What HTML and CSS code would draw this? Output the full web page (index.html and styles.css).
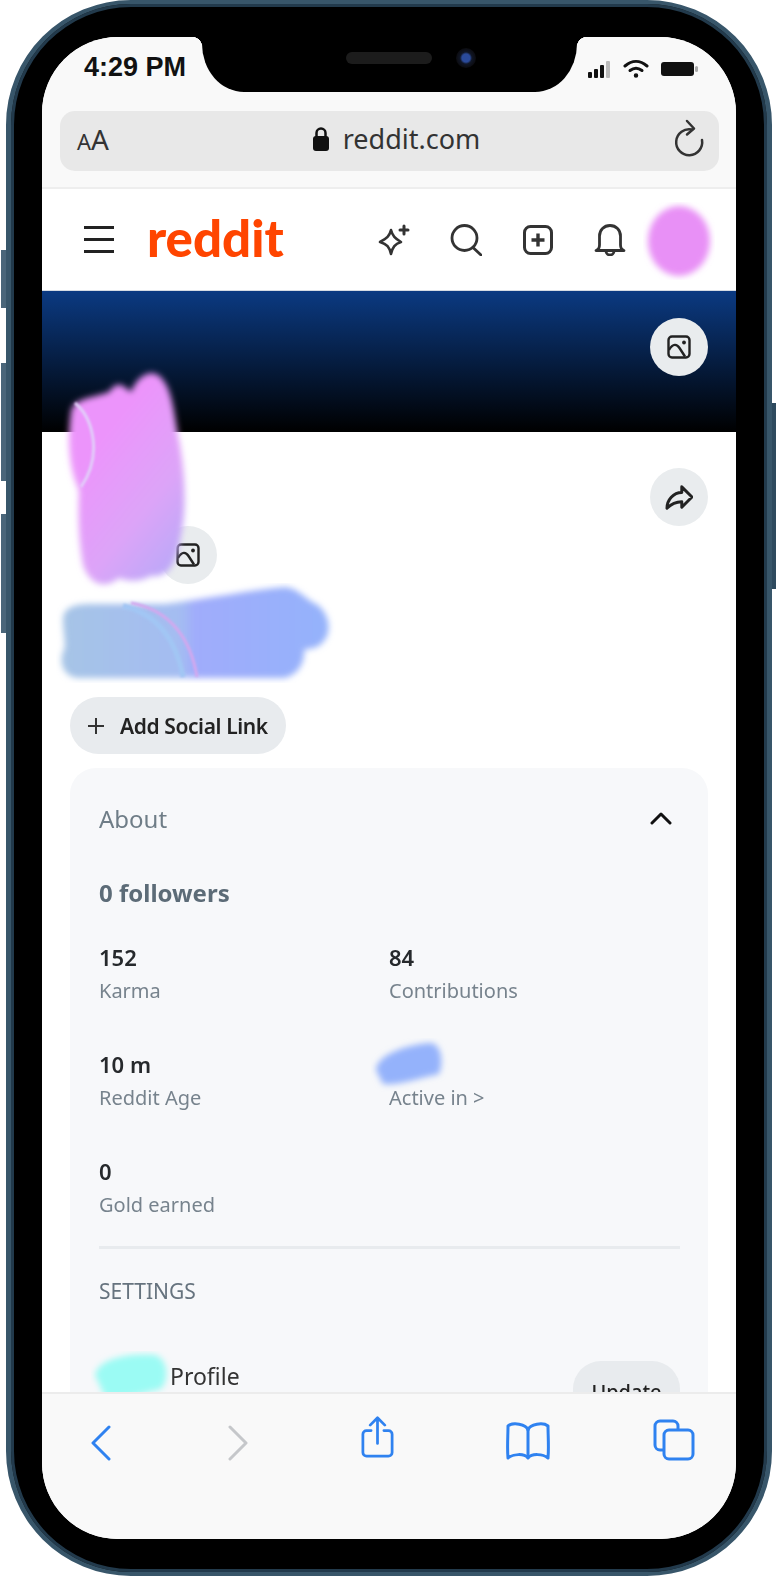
FILE: index.html
```html
<!DOCTYPE html>
<html>

<head>
    <title>Reddit profile</title>
    <link rel="stylesheet" href="styles.css">
</head>

<body>
    <div class="phone">
        <i class="side-btn btn-a"></i>
        <i class="side-btn btn-b"></i>
        <i class="side-btn btn-c"></i>
        <i class="side-btn btn-d"></i>

        <div class="screen">
            <div class="notch">
                <span class="speaker"></span>
                <span class="camera"></span>
            </div>

            <div class="chrome">
                <div class="status">
                    <span class="time">4:29 PM</span>
                    <div class="status-icons">
                        <svg width="28" height="20" viewBox="0 0 26 20">
                            <rect x="0" y="13" width="4" height="6" rx="1" fill="#111" />
                            <rect x="6" y="10" width="4" height="9" rx="1" fill="#111" />
                            <rect x="12" y="6" width="4" height="13" rx="1" fill="#111" />
                            <rect x="18" y="2" width="4" height="17" rx="1" fill="#bbb" />
                        </svg>
                        <svg class="wifi" width="26" height="20" viewBox="0 0 26 20" fill="none" stroke="#111" stroke-width="3" stroke-linecap="round">
                            <path d="M2 7C9 1 17 1 24 7" />
                            <path d="M7 11.500C11 8.500 15 8.500 19 11.500" />
                            <circle cx="13" cy="16.500" r="1.500" fill="#111" stroke-width="1.500" />
                        </svg>
                        <svg width="40" height="20" viewBox="0 0 40 20">
                            <rect x="1" y="3" width="33" height="14" rx="3" fill="#111" />
                            <rect x="35" y="7" width="3" height="6" rx="1.500" fill="#aaa" />
                        </svg>
                    </div>
                </div>
                <div class="address">
                    <span class="aa"><small>A</small>A</span>
                    <div class="url">
                        <svg width="18" height="26" viewBox="0 0 18 26">
                            <path d="M4.500 11V7a4.500 4.500 0 0 1 9 0v4" fill="none" stroke="#111" stroke-width="2.500" />
                            <rect x="1" y="10" width="16" height="15" rx="3" fill="#111" />
                        </svg>
                        <span>reddit.com</span>
                    </div>
                    <svg class="reload" width="32" height="40" viewBox="0 0 32 40" fill="none" stroke="#333" stroke-width="2.500" stroke-linecap="round" stroke-linejoin="round">
                        <path d="M19 10.500A13 13 0 1 0 29 21" />
                        <path d="M14 2l7 7.500-7 6" />
                    </svg>
                </div>
            </div>

            <div class="page">
                <header class="site-head">
                    <div class="burger"><i></i><i></i><i></i></div>
                    <span class="logo">reddit</span>
                    <div class="head-icons">
                        <svg width="32" height="32" viewBox="0 0 32 32" fill="none" stroke="#333" stroke-width="2.600" stroke-linejoin="round" stroke-linecap="round">
                            <path d="M13 6C14.500 12 17 14.500 23 18C17 20 14.500 23 13 30C11.500 23 9 20 2 18C9 14.500 11.500 12 13 6Z" />
                            <path d="M26 2v8M22 6h8" stroke-width="3" />
                        </svg>
                        <svg width="32" height="32" viewBox="0 0 32 32" fill="none" stroke="#333" stroke-width="2.800" stroke-linecap="round">
                            <circle cx="14.500" cy="14" r="12.500" />
                            <path d="M23.500 24L31 31" />
                        </svg>
                        <svg width="32" height="32" viewBox="0 0 32 32" fill="none" stroke="#333" stroke-width="3">
                            <rect x="2.500" y="2.500" width="27" height="27" rx="6" />
                            <path d="M16 9.500v13M9.500 16h13" stroke-width="3.400" />
                        </svg>
                        <svg width="32" height="32" viewBox="0 0 32 32" fill="none" stroke="#333" stroke-width="2.800" stroke-linejoin="round" stroke-linecap="round">
                            <path d="M2 26.500C5 25.500 5.500 24 5.500 21V12C5.500 6 10 1.500 16 1.500C22 1.500 26.500 6 26.500 12V21C26.500 24 27 25.500 30 26.500Z" />
                            <path d="M12 27a4 4 0 0 0 8 0" />
                        </svg>
                    </div>
                </header>

                <div class="banner">
                    <button class="round-btn">
                        <svg width="24" height="24" viewBox="0 0 24 24" fill="none" stroke="#222" stroke-width="2.400" stroke-linejoin="round">
                            <rect x="1.500" y="1.500" width="21" height="21" rx="3.500" />
                            <path d="M2 15C6 8 10 9 12.500 13L18 21.500" />
                            <circle cx="17" cy="7.500" r="1.900" fill="#222" stroke="none" />
                        </svg>
                    </button>
                </div>

                <section class="profile">
                    <div class="profile-top">
                        <button class="round-btn avatar-btn">
                            <svg width="24" height="24" viewBox="0 0 24 24" fill="none" stroke="#222" stroke-width="2.400" stroke-linejoin="round">
                                <rect x="1.500" y="1.500" width="21" height="21" rx="3.500" />
                                <path d="M2 15C6 8 10 9 12.500 13L18 21.500" />
                                <circle cx="17" cy="7.500" r="1.900" fill="#222" stroke="none" />
                            </svg>
                        </button>
                        <button class="round-btn">
                            <svg width="28" height="25" viewBox="0 0 30 27" fill="none" stroke="#222" stroke-width="3.200" stroke-linejoin="round">
                                <path d="M18 2L29 13L18 24V18C12 18 7 20 2 25C2 16 9 8 18 8Z" />
                            </svg>
                        </button>
                    </div>

                    <button class="social">
                        <svg width="18" height="18" viewBox="0 0 18 18" stroke="#333" stroke-width="2">
                            <path d="M9 1v16M1 9h16" />
                        </svg>
                        <span>Add Social Link</span>
                    </button>

                    <div class="card">
                        <div class="card-head">
                            <span>About</span>
                            <svg width="22" height="14" viewBox="0 0 22 14" fill="none" stroke="#111" stroke-width="3" stroke-linecap="round" stroke-linejoin="round">
                                <path d="M2 12L11 3L20 12" />
                            </svg>
                        </div>
                        <div class="followers">0 followers</div>
                        <div class="stats">
                            <div class="stat"><b>152</b><span>Karma</span></div>
                            <div class="stat"><b>84</b><span>Contributions</span></div>
                            <div class="stat"><b>10 m</b><span>Reddit Age</span></div>
                            <div class="stat"><b>&nbsp;</b><span>Active in &gt;</span></div>
                            <div class="stat"><b>0</b><span>Gold earned</span></div>
                        </div>
                        <div class="divider"></div>
                        <div class="settings-label">SETTINGS</div>
                        <div class="setting">
                            <span class="setting-name">Profile</span>
                            <button class="update">Update</button>
                        </div>
                    </div>
                </section>

                <!-- scribbles covering the private bits of the screenshot -->
                <svg class="scribble scr-head" width="72" height="78" viewBox="0 0 72 78">
                    <ellipse cx="36" cy="39" rx="31" ry="35" fill="#e890f6" filter="url(#soft)" />
                </svg>
                <svg class="scribble scr-avatar" width="130" height="230" viewBox="60 365 130 230">
                    <path d="M70 412C72 398 92 398 108 392C118 378 124 388 130 392C136 376 152 366 162 380C172 392 174 420 178 440C184 470 186 510 180 535C176 560 170 578 150 576C138 582 128 582 118 578C104 590 88 584 82 565C76 530 78 505 78 490C68 470 66 440 70 412Z" fill="url(#pink)" filter="url(#soft)" />
                    <path d="M74 403C92 418 102 455 80 487" fill="none" stroke="#e2cdf9" stroke-width="3" filter="url(#soft-thin)" />
                </svg>
                <svg class="scribble scr-name" width="280" height="100" viewBox="55 583 280 100">
                    <path d="M62 620C62 608 72 604 90 604L164 604C210 598 250 590 285 587C300 590 305 600 315 604C328 612 332 632 322 642C316 650 306 648 303 650C304 662 298 674 284 678L76 678C62 676 58 662 62 652C66 646 62 634 62 620Z" fill="url(#bluepurple)" filter="url(#soft)" />
                    <path d="M130 603C170 610 190 640 196 677" fill="none" stroke="#d3a8ee" stroke-width="3" filter="url(#soft-thin)" />
                    <path d="M122 606C160 615 176 645 182 677" fill="none" stroke="#a2c6f4" stroke-width="5" filter="url(#soft-thin)" />
                </svg>
                <svg class="scribble scr-active" width="80" height="54" viewBox="0 0 80 54">
                    <path d="M5 32C6 16 38 6 60 5C72 7 72 28 68 36C50 40 25 48 12 46Z" fill="#94b2fb" filter="url(#soft)" />
                </svg>
                <svg class="scribble scr-setting" width="84" height="54" viewBox="0 0 84 54">
                    <path d="M4 24C8 6 42 2 64 4C78 8 78 30 70 38C52 42 30 50 14 46Z" fill="#9bfbf4" filter="url(#soft)" />
                </svg>
            </div>

            <nav class="toolbar">
                <svg class="tb-back" width="22" height="36" viewBox="0 0 22 36" fill="none" stroke="#2f82f0" stroke-width="3" stroke-linecap="round" stroke-linejoin="round">
                    <path d="M19 2L3 18L19 34" />
                </svg>
                <svg class="tb-forward" width="22" height="36" viewBox="0 0 22 36" fill="none" stroke="#c5c7ca" stroke-width="3" stroke-linecap="round" stroke-linejoin="round">
                    <path d="M3 2L19 18L3 34" />
                </svg>
                <svg class="tb-share" width="33" height="42" viewBox="0 0 36 46" fill="none" stroke="#2f82f0" stroke-width="3" stroke-linecap="round" stroke-linejoin="round">
                    <path d="M11 16H6a4 4 0 0 0-4 4v20a4 4 0 0 0 4 4h24a4 4 0 0 0 4-4V20a4 4 0 0 0-4-4h-5" />
                    <path d="M18 30V3M10 10l8-8 8 8" />
                </svg>
                <svg class="tb-book" width="46" height="38" viewBox="0 0 46 38" fill="none" stroke="#2f82f0" stroke-width="3" stroke-linecap="round" stroke-linejoin="round">
                    <path d="M23 8C21 2 8 0 3 4C3 14 2 26 3 36C8 32 19 31 23 36C27 31 38 32 43 36C44 26 43 14 43 4C38 0 25 2 23 8Z" />
                    <path d="M23 8V34" />
                </svg>
                <svg class="tb-tabs" width="42" height="42" viewBox="0 0 42 42" fill="none" stroke="#2f82f0" stroke-width="3" stroke-linejoin="round">
                    <path d="M11 31H7a5 5 0 0 1-5-5V7a5 5 0 0 1 5-5h13a5 5 0 0 1 5 5v4" />
                    <rect x="11" y="11" width="29" height="29" rx="5" />
                </svg>
            </nav>
        </div>
    </div>

    <svg width="0" height="0" class="defs">
        <defs>
            <filter id="soft" x="-20%" y="-20%" width="140%" height="140%">
                <feGaussianBlur stdDeviation="3" />
            </filter>
            <filter id="soft-thin" x="-20%" y="-20%" width="140%" height="140%">
                <feGaussianBlur stdDeviation="1" />
            </filter>
            <linearGradient id="pink" x1="0.200" y1="0.100" x2="0.800" y2="1">
                <stop offset="0.200" stop-color="#ec94fb" />
                <stop offset="0.650" stop-color="#dda4f8" />
                <stop offset="1" stop-color="#bba8f8" />
            </linearGradient>
            <linearGradient id="bluepurple" x1="0" y1="0" x2="1" y2="0">
                <stop offset="0" stop-color="#a6c4e6" />
                <stop offset="0.450" stop-color="#a4bcf2" />
                <stop offset="0.500" stop-color="#a0acfb" />
                <stop offset="1" stop-color="#94b2fb" />
            </linearGradient>
        </defs>
    </svg>
</body>

</html>
```

FILE: styles.css
```css
* {
    box-sizing: border-box;
}

body {
    margin: 0;
    background-color: white;
    font-family: "Noto Sans", "Liberation Sans", sans-serif;
}

.defs {
    position: absolute;
}

button {
    border: none;
    font-family: inherit;
    padding: 0;
}

/* device */
.phone {
    position: relative;
    width: 766px;
    height: 1576px;
    margin-left: 6px;
    padding: 33px 31px;
    background-color: black;
    border-style: solid;
    border-color: #38566a;
    border-width: 4px 5px;
    border-radius: 125px;
    box-shadow: inset 0 0 0 3px #223a4c;
    filter: blur(0.6px);
}

.side-btn {
    position: absolute;
    width: 5px;
    background-color: #4a667a;
}

.btn-a { left: -10px; top: 246px; height: 58px; }
.btn-b { left: -10px; top: 359px; height: 118px; }
.btn-c { left: -10px; top: 510px; height: 119px; }
.btn-d { right: -9px; top: 399px; width: 4px; height: 186px; background-color: #2e4a5e; }

.screen {
    position: relative;
    display: flex;
    flex-direction: column;
    height: 100%;
    overflow: hidden;
    background-color: white;
    border-radius: 76px;
}

.notch {
    position: absolute;
    top: 0;
    left: 160px;
    width: 375px;
    height: 55px;
    display: flex;
    justify-content: center;
    align-items: center;
    gap: 24px;
    padding-bottom: 14px;
    padding-left: 42px;
    background-color: black;
    border-radius: 0 0 42px 42px / 0 0 48px 48px;
}

.notch::before,
.notch::after {
    content: "";
    position: absolute;
    top: 0;
    width: 10px;
    height: 10px;
}

.notch::before {
    left: -10px;
    background: radial-gradient(circle at 0 100%, transparent 10px, black 10.500px);
}

.notch::after {
    right: -10px;
    background: radial-gradient(circle at 100% 100%, transparent 10px, black 10.500px);
}

.speaker {
    width: 86px;
    height: 12px;
    background-color: #1c1c1c;
    border-radius: 6px;
}

.camera {
    width: 20px;
    height: 20px;
    background: radial-gradient(circle, #2a4a9a 0 4px, #101626 6px, #0b0b0f 10px);
    border-radius: 50%;
}

/* safari top */
.chrome {
    flex: none;
    height: 152px;
    background-color: #f9f9f9;
    border-bottom: 2px solid #eeeeee;
}

.status {
    display: flex;
    justify-content: space-between;
    align-items: center;
    height: 74px;
    padding: 0 36px 14px 42px;
}

.time {
    font-family: "Liberation Sans", sans-serif;
    font-size: 27px;
    font-weight: bold;
    color: #111;
}

.status-icons {
    display: flex;
    align-items: center;
    gap: 8px;
    padding-top: 4px;
}

.wifi {
    margin-right: 3px;
}

.address {
    display: flex;
    justify-content: space-between;
    align-items: center;
    height: 60px;
    margin: 0 17px 0 18px;
    padding: 0 14px 5px 17px;
    background-color: #e8e8e8;
    border-radius: 15px;
}

.aa {
    font-size: 28px;
    color: #333;
}

.aa small {
    font-size: 22px;
}

.url {
    display: flex;
    align-items: center;
    gap: 13px;
    margin-left: 10px;
    font-size: 27px;
    color: #333;
}

/* reddit page */
.page {
    position: relative;
    flex: 1;
    min-height: 0;
    overflow: hidden;
}

.site-head {
    display: flex;
    align-items: center;
    height: 102px;
    padding: 0 110px 0 42px;
    border-bottom: 1px solid #d5dbe3;
}

.burger {
    display: flex;
    flex-direction: column;
    gap: 9px;
    width: 30px;
}

.burger i {
    height: 3px;
    background-color: #222;
}

.logo {
    margin: 0 0 5px 33px;
    font-family: "Lato", sans-serif;
    font-size: 51px;
    font-weight: 900;
    line-height: 1;
    color: #ff4500;
}

.head-icons {
    display: flex;
    gap: 40px;
    margin-left: auto;
}

.banner {
    display: flex;
    justify-content: flex-end;
    height: 141px;
    padding: 27px 28px 0 0;
    background: linear-gradient(#0b3a82, #000);
}

.round-btn {
    display: flex;
    justify-content: center;
    align-items: center;
    width: 58px;
    height: 58px;
    background-color: #e9ecee;
    border-radius: 50%;
}

.profile {
    padding: 0 28px;
}

.profile-top {
    display: flex;
    justify-content: space-between;
    align-items: flex-start;
    height: 265px;
    padding-top: 36px;
}

.avatar-btn {
    margin: 58px 0 0 89px;
}

.social {
    display: flex;
    align-items: center;
    gap: 15px;
    width: 216px;
    height: 57px;
    padding: 0 17px;
    background-color: #e8ebee;
    border-radius: 29px;
    font-size: 21px;
    font-weight: 600;
    letter-spacing: -0.4px;
    color: #222;
}

.card {
    height: 700px;
    margin-top: 14px;
    padding: 0 28px 0 29px;
    background-color: #f7f8fa;
    border-radius: 26px;
}

.card-head {
    display: flex;
    justify-content: space-between;
    align-items: center;
    height: 100px;
    padding-right: 8px;
    font-size: 24px;
    color: #6f7d87;
}

.followers {
    margin-top: 9px;
    font-size: 24px;
    font-weight: 700;
    line-height: 32px;
    color: #5c6b77;
}

.stats {
    display: grid;
    grid-template-columns: 290px 1fr;
    row-gap: 40px;
    margin-top: 31px;
}

.stat {
    display: flex;
    flex-direction: column;
    height: 67px;
}

.stat b {
    font-size: 22px;
    font-weight: 600;
    line-height: 34px;
    color: #26292c;
}

.stat span {
    font-size: 20px;
    line-height: 33px;
    color: #77838d;
}

.divider {
    height: 3px;
    margin-top: 25px;
    background-color: #e8ebee;
}

.settings-label {
    margin-top: 27px;
    font-size: 21px;
    line-height: 30px;
    color: #66737e;
}

.setting {
    display: flex;
    justify-content: space-between;
    align-items: flex-start;
    margin-top: 48px;
}

.setting-name {
    margin: 5px 0 0 71px;
    font-size: 23px;
    line-height: 34px;
    color: #333;
}

.update {
    width: 107px;
    height: 60px;
    margin-top: 7px;
    background-color: #e8ebee;
    border-radius: 28px;
    font-size: 20px;
    font-weight: 500;
    color: #222;
}

.scribble {
    position: absolute;
}

.scr-head { left: 601px; top: 13px; }
.scr-avatar { left: 19px; top: 176px; }
.scr-name { left: 14px; top: 394px; }
.scr-active { left: 329px; top: 849px; }
.scr-setting { left: 49px; top: 1162px; }

/* safari bottom */
.toolbar {
    flex: none;
    display: flex;
    align-items: flex-start;
    height: 147px;
    padding-left: 48px;
    background-color: #f9f9f9;
    border-top: 2px solid #ececec;
}

.tb-back { margin-top: 31px; }
.tb-forward { margin: 31px 0 0 115px; }
.tb-share { margin: 22px 0 0 112px; }
.tb-book { margin: 28px 0 0 111px; }
.tb-tabs { margin: 25px 0 0 102px; }
```
